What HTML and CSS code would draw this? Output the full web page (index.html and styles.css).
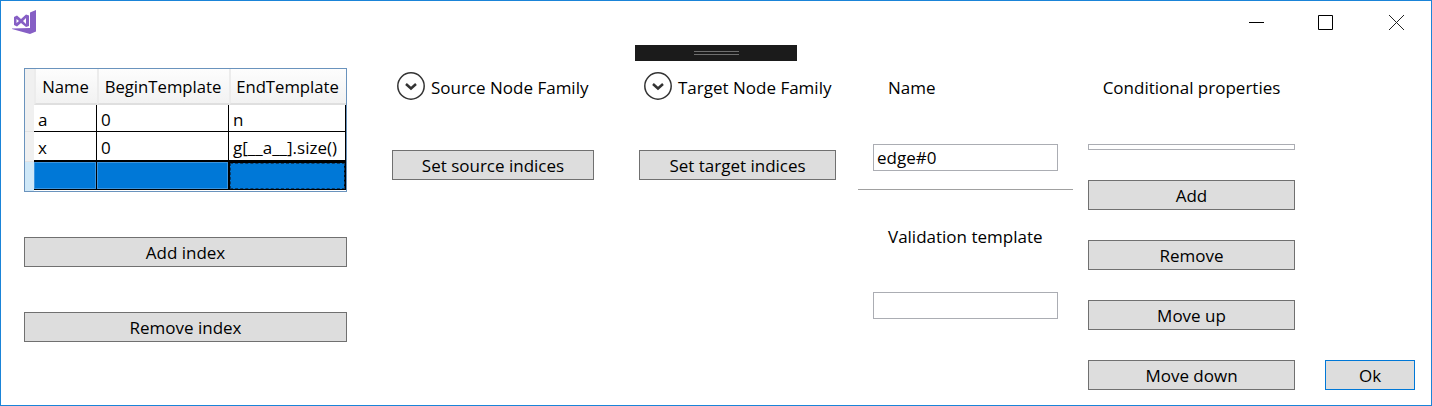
FILE: index.html
```html
<!DOCTYPE html>
<html lang="en">
<head>
<meta charset="utf-8">
<title>Edge family</title>
<link rel="stylesheet" href="styles.css">
</head>
<body>
<div class="window">
  <header class="titlebar">
    <svg class="app-icon" width="24" height="24" viewBox="0 0 24 24">
      <path class="logo-fill" d="M18 2.500 24 0V21.500L18 24 0 19V18.500L18 18Z"/>
      <path class="logo-fill" fill-rule="evenodd" d="M2 7 5 5.500 9 9 14 4.500 17 5.500V16L14 17 9 13 5 16.500 2 15ZM4.500 9V13L7 11ZM14 8 11 11 14 14Z"/>
    </svg>
    <div class="caption">
      <svg class="cap-btn" width="46" height="16" viewBox="0 0 46 16"><path class="cap-line" d="M16 7.500H31"/></svg>
      <svg class="cap-btn" width="46" height="16" viewBox="0 0 46 16"><path class="cap-line" d="M15.500 .5H29.500V14.500H15.500Z"/></svg>
      <svg class="cap-btn" width="46" height="16" viewBox="0 0 46 16"><path class="cap-thin" d="M16 0 31 15M31 0 16 15"/></svg>
    </div>
  </header>
  <div class="debug-handle"><span class="grip"></span></div>
  <main class="main">
    <section class="col col-index">
      <div class="grid">
        <div class="corner"></div>
        <div class="head">Name</div>
        <div class="head">BeginTemplate</div>
        <div class="head">EndTemplate</div>
        <div class="rowhead"></div>
        <div class="cell">a</div>
        <div class="cell">0</div>
        <div class="cell">n</div>
        <div class="rowhead"></div>
        <div class="cell cell-last">x</div>
        <div class="cell cell-last">0</div>
        <div class="cell cell-last">g[__a__].size()</div>
        <div class="rowhead rowhead-sel"></div>
        <div class="cell sel"></div>
        <div class="cell sel"></div>
        <div class="cell sel sel-focus"></div>
      </div>
      <button class="btn">Add index</button>
      <button class="btn">Remove index</button>
    </section>
    <section class="col col-source">
      <div class="expander">
        <svg width="28" height="28" viewBox="0 0 28 28"><circle class="exp-ring" cx="14" cy="14" r="13.200"/><path class="exp-chev" d="M9 12 14 16.500 19 12"/></svg>
        <span>Source Node Family</span>
      </div>
      <button class="btn btn-set">Set source indices</button>
    </section>
    <section class="col col-target">
      <div class="expander">
        <svg width="28" height="28" viewBox="0 0 28 28"><circle class="exp-ring" cx="14" cy="14" r="13.200"/><path class="exp-chev" d="M9 12 14 16.500 19 12"/></svg>
        <span>Target Node Family</span>
      </div>
      <button class="btn btn-set">Set target indices</button>
    </section>
    <section class="col col-name">
      <div class="label label-name">Name</div>
      <input class="field field-name" type="text" value="edge#0">
      <div class="sep"></div>
      <div class="label label-valid">Validation template</div>
      <input class="field field-valid" type="text">
    </section>
    <section class="col col-cond">
      <div class="label label-cond">Conditional properties</div>
      <div class="list"></div>
      <button class="btn btn-first">Add</button>
      <button class="btn">Remove</button>
      <button class="btn">Move up</button>
      <button class="btn">Move down</button>
    </section>
    <section class="col col-ok">
      <button class="btn btn-ok">Ok</button>
    </section>
  </main>
</div>
</body>
</html>
```
FILE: styles.css
```css
* { box-sizing: border-box; }
html, body { margin: 0; padding: 0; background: #fff; }
body {
  font-family: "Open Sans", "Noto Sans", "Liberation Sans", sans-serif;
  font-size: 17px;
  color: #000;
}
.window {
  position: relative;
  display: flex;
  flex-direction: column;
  width: 1432px;
  height: 406px;
  border: 1px solid #1a84d8;
  background: #fff;
  overflow: hidden;
}
.titlebar {
  display: flex;
  justify-content: space-between;
  align-items: flex-start;
  flex: 0 0 44px;
  padding: 9px 0 0 11px;
}
.app-icon { display: block; }
.logo-fill { fill: #865fc5; }
.caption {
  display: flex;
  gap: 24px;
  margin-top: 5px;
  margin-right: 12px;
}
.cap-btn { display: block; }
.cap-line { fill: none; stroke: #000; stroke-width: 1; }
.cap-thin { fill: none; stroke: #222; stroke-width: 1; }
.debug-handle {
  position: absolute;
  top: 44px;
  left: 634px;
  width: 162px;
  height: 16px;
  background: #1b1b1b;
  display: flex;
  align-items: center;
  justify-content: center;
}
.grip {
  display: block;
  width: 45px;
  height: 4px;
  border-top: 1px solid #6e6e6e;
  border-bottom: 1px solid #6e6e6e;
}
.main {
  display: flex;
  flex: 1;
  padding: 23px 15px 15px 23px;
}
.col { display: flex; flex-direction: column; }
.col-index { width: 323px; margin-right: 45px; gap: 45px; }
.col-source { width: 202px; margin-right: 45px; padding-top: 4px; }
.col-target { width: 197px; margin-right: 22px; padding-top: 4px; }
.col-name { width: 215px; margin-right: 15px; }
.col-cond { width: 207px; margin-right: 30px; }
.col-ok { width: 90px; justify-content: flex-end; }

.grid {
  display: grid;
  grid-template-columns: 9px 63px 132px 117px;
  grid-template-rows: 36px 27px 30px 29px;
  height: 124px;
  border: 1px solid #6a93bd;
  background: #fff;
  line-height: 1;
}
.corner { background: #f0f0f0; }
.head {
  display: flex;
  align-items: center;
  justify-content: center;
  padding: 2px 2px 0 0;
  background: linear-gradient(#fdfdfd, #f2f2f2);
  border-left: 2px solid #ececec;
  border-bottom: 2px solid #dfdfdf;
  font-size: 16.700px;
  white-space: nowrap;
}
.rowhead { background: #f0f0f0; border-bottom: 1px solid #e2e2e2; }
.rowhead-sel { background: #cfe8f8; border-bottom: 0; }
.cell {
  display: flex;
  align-items: center;
  padding: 2px 0 0 4px;
  border-right: 1px solid #000;
  border-bottom: 1px solid #000;
  white-space: nowrap;
}
.cell-last { border-bottom-width: 2px; }
.sel {
  background: #0078d7;
  margin-bottom: 1px;
  box-shadow: inset 0 0 0 1px #3b95df;
}
.sel-focus {
  border: 1px solid #000;
  border-right-width: 2px;
  outline: 1px dashed #0b3c66;
  outline-offset: -2px;
  box-shadow: none;
}

.btn {
  display: block;
  width: 100%;
  height: 30px;
  padding: 0;
  border: 1px solid #707070;
  border-radius: 0;
  background: #ddd;
  color: #000;
  font: inherit;
  line-height: 1;
}
.btn-set { margin-top: 50px; }
.btn-first { margin-top: 30px; }
.col-cond .btn + .btn { margin-top: 30px; }
.btn-ok { border-color: #0078d7; }

.expander {
  display: flex;
  align-items: center;
  gap: 6px;
  height: 28px;
  padding-left: 5px;
  white-space: nowrap;
}
.expander span { padding-top: 3px; }
.expander svg { display: block; flex: none; }
.exp-ring { fill: #fff; stroke: #333; stroke-width: 1.5; }
.exp-chev { fill: none; stroke: #333; stroke-width: 2.500; }

.label { height: 24px; line-height: 24px; white-space: nowrap; }
.label-name { margin-top: 8px; padding-left: 30px; }
.label-valid { margin-top: 35px; padding-left: 30px; }
.label-cond { margin-top: 8px; text-align: center; }
.field {
  display: block;
  width: 185px;
  height: 27px;
  margin-left: 15px;
  padding: 0 3px;
  border: 1px solid #abadb3;
  border-radius: 0;
  background: #fff;
  color: #000;
  font: inherit;
  outline: 0;
}
.field-name { margin-top: 44px; }
.field-valid { margin-top: 43px; }
.sep { height: 1px; margin-top: 18px; background: #a0a0a0; }
.list {
  height: 6px;
  margin-top: 44px;
  border: 1px solid #abadb3;
  background: #fff;
}
```
